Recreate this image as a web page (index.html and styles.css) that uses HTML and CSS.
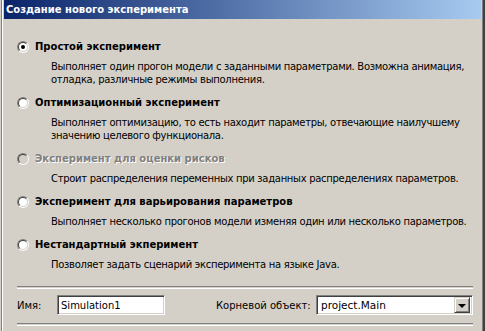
FILE: index.html
```html
<!DOCTYPE html>
<html lang="ru">
<head>
    <meta charset="utf-8">
    <title>Создание нового эксперимента</title>
    <link rel="stylesheet" href="styles.css">
</head>
<body>
    <div class="window">
        <div class="titlebar">Создание нового эксперимента</div>
        <div class="content">
            <div class="options">
                <div class="option">
                    <div class="option-head"><span class="radio checked"></span><span class="option-title">Простой эксперимент</span></div>
                    <p class="option-desc">Выполняет один прогон модели с заданными параметрами. Возможна анимация,<br>отладка, различные режимы выполнения.</p>
                </div>
                <div class="option">
                    <div class="option-head"><span class="radio"></span><span class="option-title">Оптимизационный эксперимент</span></div>
                    <p class="option-desc">Выполняет оптимизацию, то есть находит параметры, отвечающие наилучшему<br>значению целевого функционала.</p>
                </div>
                <div class="option disabled">
                    <div class="option-head"><span class="radio"></span><span class="option-title">Эксперимент для оценки рисков</span></div>
                    <p class="option-desc">Строит распределения переменных при заданных распределениях параметров.</p>
                </div>
                <div class="option">
                    <div class="option-head"><span class="radio"></span><span class="option-title">Эксперимент для варьирования параметров</span></div>
                    <p class="option-desc">Выполняет несколько прогонов модели изменяя один или несколько параметров.</p>
                </div>
                <div class="option">
                    <div class="option-head"><span class="radio"></span><span class="option-title">Нестандартный экперимент</span></div>
                    <p class="option-desc">Позволяет задать сценарий эксперимента на языке Java.</p>
                </div>
            </div>
            <div class="separator"></div>
            <div class="fields">
                <label class="name-label" for="expName">Имя:</label>
                <input class="text-box" type="text" id="expName" value="Simulation1">
                <span class="root-label">Корневой объект:</span>
                <div class="combo">
                    <span class="combo-value">project.Main</span>
                    <span class="combo-button"><span class="arrow"></span></span>
                </div>
            </div>
            <div class="separator"></div>
        </div>
    </div>
</body>
</html>
```
FILE: styles.css
```css
html, body {
    margin: 0;
    padding: 0;
    height: 100%;
    overflow: hidden;
    background-color: #d4d0c8;
}
body {
    font-family: "DejaVu Sans", Tahoma, sans-serif;
    font-size: 10px;
    color: #000;
}
.window {
    height: 331px;
    padding: 0 4px;
    background: linear-gradient(to right, #d4d0c8 0 1px, #808080 1px 2px, #fff 2px 3px, #d4d0c8 3px calc(100% - 3px), #808080 calc(100% - 3px) calc(100% - 2px), #404040 calc(100% - 2px));
}
.titlebar {
    height: 19px;
    line-height: 19px;
    padding-left: 2px;
    color: #fff;
    font-weight: bold;
    font-size: 10px;
    background: linear-gradient(to right, #0a246a, #a6caf0);
}
.content {
    padding: 21px 5px 0 13px;
}
.option + .option {
    margin-top: 10px;
}
.option-head {
    display: flex;
    align-items: center;
    gap: 6px;
    height: 13px;
}
.option-title {
    font-weight: bold;
    white-space: nowrap;
}
.option-desc {
    margin: 7px 0 0 34px;
    line-height: 13px;
    letter-spacing: -0.3px;
    white-space: nowrap;
}
.disabled .option-title {
    color: #808080;
    text-shadow: 1px 1px 0 #fff;
}
.radio {
    position: relative;
    flex: none;
    width: 10px;
    height: 10px;
    border: 1px solid;
    border-color: #808080 #fff #fff #808080;
    border-radius: 50%;
    box-sizing: content-box;
}
.radio::before {
    content: "";
    position: absolute;
    inset: 0;
    border: 1px solid;
    border-color: #404040 #d4d0c8 #d4d0c8 #404040;
    border-radius: 50%;
    background-color: #fff;
}
.disabled .radio::before {
    background-color: #d4d0c8;
}
.radio.checked::after {
    content: "";
    position: absolute;
    left: 3px;
    top: 3px;
    width: 4px;
    height: 4px;
    border-radius: 50%;
    background-color: #000;
}
.separator {
    height: 1px;
    border-top: 1px solid #808080;
    border-bottom: 1px solid #fff;
    margin-right: 3px;
}
.options {
    margin-bottom: 15px;
}
.fields {
    display: flex;
    align-items: center;
    height: 20px;
    margin: 6px 0 8px;
}
.name-label {
    width: 40px;
}
.text-box {
    width: 108px;
    height: 20px;
    box-sizing: border-box;
    margin: 0;
    padding: 0 0 0 3px;
    font: inherit;
    border: 1px solid;
    border-color: #808080 #fff #fff #808080;
    box-shadow: inset 1px 1px 0 #404040, inset -1px -1px 0 #d4d0c8;
    background-color: #fff;
    outline: none;
}
.root-label {
    width: 100px;
    margin-left: 51px;
    white-space: nowrap;
}
.combo {
    display: flex;
    align-items: center;
    width: 157px;
    height: 20px;
    box-sizing: border-box;
    border: 1px solid;
    border-color: #808080 #fff #fff #808080;
    box-shadow: inset 1px 1px 0 #404040, inset -1px -1px 0 #d4d0c8;
    background-color: #fff;
    padding: 2px;
}
.combo-value {
    flex: 1;
    padding-left: 2px;
    font-size: 10.5px;
}
.combo-button {
    display: flex;
    align-items: center;
    justify-content: center;
    width: 16px;
    height: 16px;
    box-sizing: border-box;
    background-color: #d4d0c8;
    border: 1px solid;
    border-color: #d4d0c8 #404040 #404040 #d4d0c8;
    box-shadow: inset 1px 1px 0 #fff, inset -1px -1px 0 #808080;
}
.arrow {
    width: 0;
    height: 0;
    border-left: 4px solid transparent;
    border-right: 4px solid transparent;
    border-top: 4px solid #000;
    margin-top: 1px;
}
```
